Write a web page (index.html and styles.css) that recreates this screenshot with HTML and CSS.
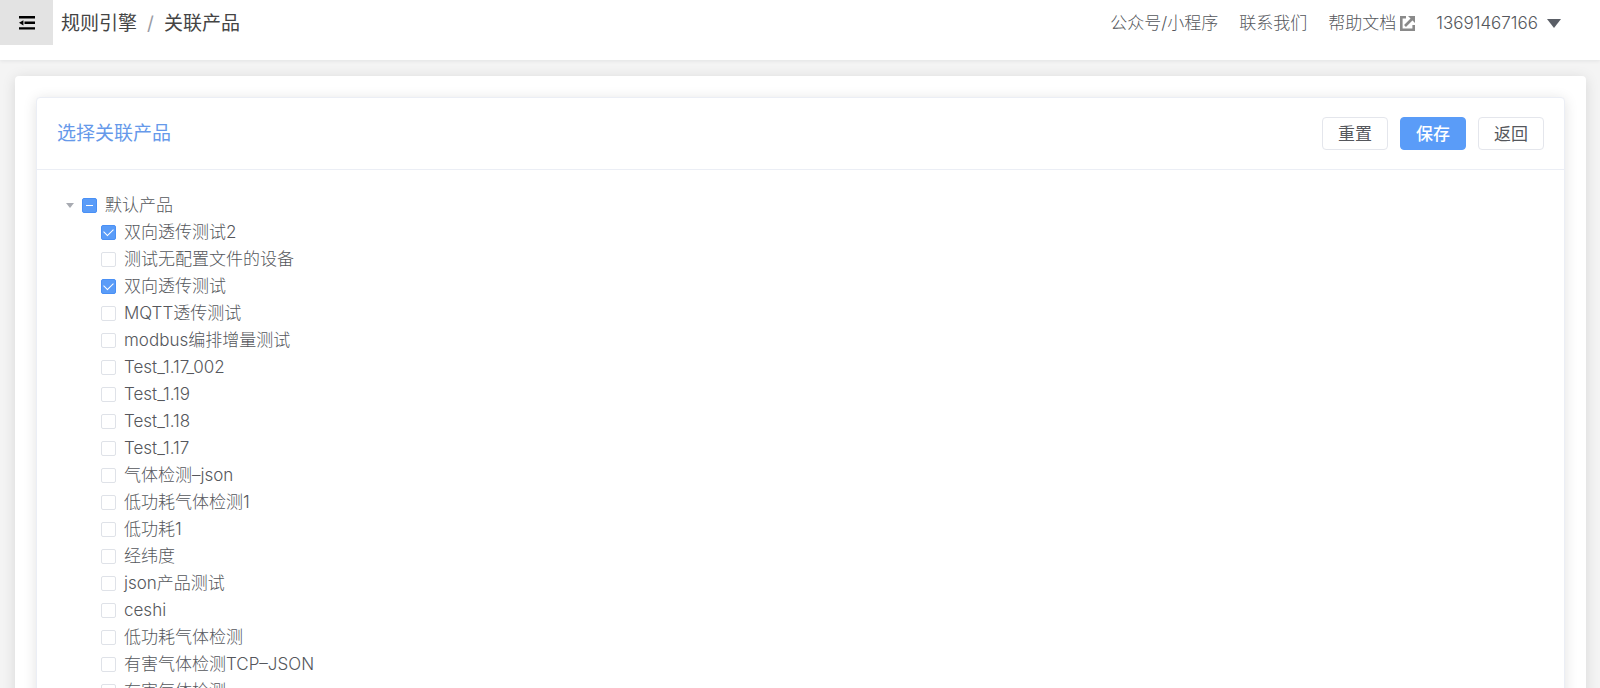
FILE: index.html
```
<!DOCTYPE html>
<html lang="zh-CN">
<head>
    <meta charset="UTF-8">
    <meta name="viewport" content="width=device-width, initial-scale=1.0">
    <title>关联产品</title>
    <link rel="stylesheet" href="styles.css">
</head>
<body>
    <header class="topbar">
        <button class="menu-toggle" type="button" aria-label="收起菜单">
            <svg width="16" height="14" viewBox="0 0 16 14">
                <path d="M0 0h16v2.400H0zM5.500 5.600h10.500v2.400H5.500zM0 11.200h16v2.400H0zM0 6.800L4.400 4.200v5.200z"/>
            </svg>
        </button>
        <nav class="breadcrumb">
            <a href="#">规则引擎</a>
            <span class="slash">/</span>
            <a href="#">关联产品</a>
        </nav>
        <div class="links">
            <a href="#">公众号/小程序</a>
            <a href="#">联系我们</a>
            <a class="docs" href="#">帮助文档
                <svg width="15" height="15" viewBox="0 0 15 15" fill="none" stroke="#8a8a8a">
                    <path d="M6 1.300H1.300v12.400h12.400V9" stroke-width="2.600"/>
                    <path d="M5 10L12 3" stroke-width="2.600"/>
                    <path d="M8 0h7v7z" fill="#8a8a8a" stroke="none"/>
                </svg>
            </a>
            <button class="account" type="button">13691467166
                <svg width="14" height="9" viewBox="0 0 14 9"><path d="M0 0h14L7 9z" fill="#5a5e66"/></svg>
            </button>
        </div>
    </header>

    <main class="page">
        <section class="card">
            <div class="card-header">
                <h1>选择关联产品</h1>
                <div class="actions">
                    <button class="btn" type="button">重置</button>
                    <button class="btn primary" type="button">保存</button>
                    <button class="btn" type="button">返回</button>
                </div>
            </div>
            <div class="tree">
                <div class="root">
                    <svg class="caret" width="8" height="5" viewBox="0 0 8 5"><path d="M0 0h8L4 5z" fill="#a8abb2"/></svg>
                    <label><input type="checkbox" id="check-all">默认产品</label>
                </div>
                <ul class="children">
                    <li><label><input type="checkbox" checked>双向透传测试2</label></li>
                    <li><label><input type="checkbox">测试无配置文件的设备</label></li>
                    <li><label><input type="checkbox" checked>双向透传测试</label></li>
                    <li><label><input type="checkbox">MQTT透传测试</label></li>
                    <li><label><input type="checkbox">modbus编排增量测试</label></li>
                    <li><label><input type="checkbox">Test_1.17_002</label></li>
                    <li><label><input type="checkbox">Test_1.19</label></li>
                    <li><label><input type="checkbox">Test_1.18</label></li>
                    <li><label><input type="checkbox">Test_1.17</label></li>
                    <li><label><input type="checkbox">气体检测–json</label></li>
                    <li><label><input type="checkbox">低功耗气体检测1</label></li>
                    <li><label><input type="checkbox">低功耗1</label></li>
                    <li><label><input type="checkbox">经纬度</label></li>
                    <li><label><input type="checkbox">json产品测试</label></li>
                    <li><label><input type="checkbox">ceshi</label></li>
                    <li><label><input type="checkbox">低功耗气体检测</label></li>
                    <li><label><input type="checkbox">有害气体检测TCP–JSON</label></li>
                    <li><label><input type="checkbox">有害气体检测</label></li>
                </ul>
            </div>
        </section>
    </main>

    <script>
        const allEl = document.getElementById('check-all');
        const itemEls = [...document.querySelectorAll('.children input')];

        function updateRoot() {
            const checked = itemEls.filter(el => el.checked).length;
            allEl.checked = checked === itemEls.length;
            allEl.indeterminate = checked > 0 && checked < itemEls.length;
        }

        allEl.onchange = () => {
            itemEls.forEach(el => el.checked = allEl.checked);
            updateRoot();
        };

        itemEls.forEach(el => el.onchange = updateRoot);
        updateRoot();
    </script>
</body>
</html>
```
FILE: styles.css
```
* {
    box-sizing: border-box;
}

body {
    margin: 0;
    background: #f4f4f4;
    color: #55575c;
    font-family: Inter, "Noto Sans CJK SC", sans-serif;
    font-size: 17px;
    font-weight: 300;
}

a {
    color: inherit;
    text-decoration: none;
}

button {
    font: inherit;
    color: inherit;
    cursor: pointer;
}

.topbar {
    display: flex;
    align-items: flex-start;
    height: 60px;
    background: white;
    box-shadow: 0 1px 4px rgba(0, 21, 41, 0.08);
}

.menu-toggle {
    display: flex;
    align-items: center;
    justify-content: center;
    width: 53px;
    height: 45px;
    padding: 0;
    border: none;
    background: #e3e3e3;
}

.breadcrumb {
    display: flex;
    gap: 10px;
    margin-left: 8px;
    line-height: 48px;
    font-size: 19px;
    font-weight: 400;
    color: #444;
}

.slash {
    color: #999ca5;
}

.links {
    display: flex;
    align-items: center;
    gap: 21px;
    margin-left: auto;
    padding-right: 39px;
    line-height: 46px;
}

.docs,
.account {
    display: flex;
    align-items: center;
    gap: 4px;
}

.account {
    gap: 9px;
    padding: 0;
    border: none;
    background: none;
}

.page {
    margin: 16px 14px 16px 15px;
    padding: 21px;
    border-radius: 4px;
    background: white;
    box-shadow: 0 2px 14px rgba(0, 0, 0, 0.12);
}

.card {
    border: 1px solid #ebeef5;
    border-radius: 4px;
    background: white;
    box-shadow: 0 2px 14px rgba(0, 0, 0, 0.12);
}

.card-header {
    display: flex;
    align-items: center;
    justify-content: space-between;
    padding: 19px 20px;
    border-bottom: 1px solid #ebeef5;
}

h1 {
    margin: 0;
    line-height: 33px;
    font-size: 19px;
    font-weight: 400;
    color: #6699ea;
}

.actions {
    display: flex;
    gap: 12px;
}

.btn {
    width: 66px;
    height: 33px;
    padding: 0;
    border: 1px solid #e4e6ec;
    border-radius: 4px;
    background: white;
    font-size: 17px;
    font-weight: 400;
    line-height: 30px;
}

.primary {
    border-color: #5a9cf8;
    background: #5a9cf8;
    color: white;
    font-weight: 500;
}

.tree {
    padding: 22px 21px;
    line-height: 27px;
}

.root {
    display: flex;
    align-items: center;
    gap: 8px;
    padding-left: 8px;
}

.children {
    margin: 0;
    padding: 0 0 0 43px;
    list-style: none;
}

label {
    display: flex;
    align-items: center;
    width: fit-content;
    height: 27px;
    cursor: pointer;
}

input {
    appearance: none;
    display: grid;
    place-items: center;
    width: 15px;
    height: 15px;
    margin: 0 8px 0 0;
    border: 1px solid #dfe2e8;
    border-radius: 2px;
    background: white;
}

input:checked,
input:indeterminate {
    border-color: #4a90f5;
    background: #5a9cf8;
}

input:checked::before {
    content: "";
    width: 8px;
    height: 5px;
    margin-bottom: 3px;
    border: solid white;
    border-width: 0 0 1px 1px;
    transform: rotate(-45deg);
}

input:indeterminate::before {
    content: "";
    width: 7px;
    height: 1px;
    background: white;
}
```
